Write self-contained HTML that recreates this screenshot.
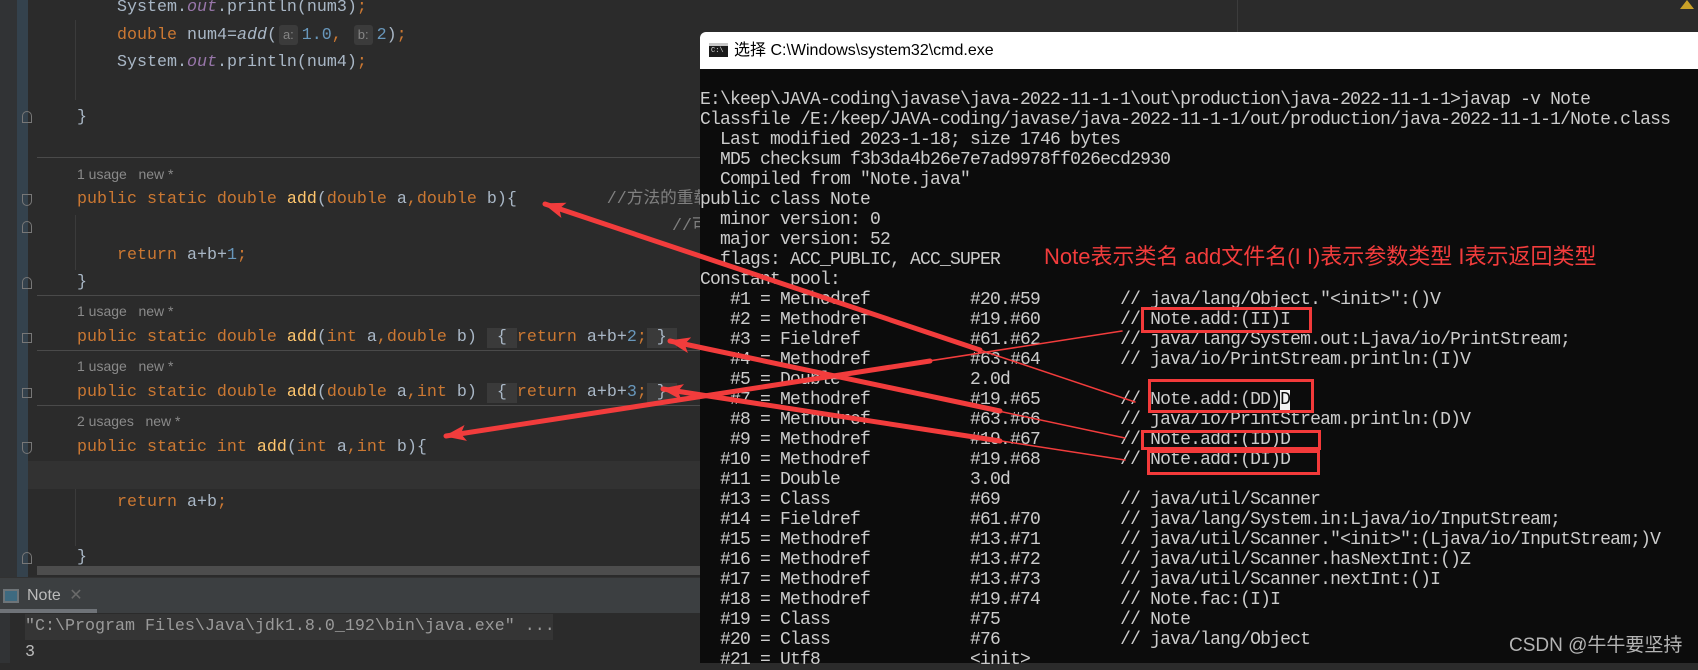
<!DOCTYPE html>
<html><head><meta charset="utf-8"><style>
*{margin:0;padding:0;box-sizing:border-box}
body{width:1698px;height:663px;overflow:hidden;background:#2b2b2b;position:relative;font-family:"Liberation Sans","Noto Sans CJK SC",sans-serif}
.a{position:absolute}
.c{position:absolute;font-family:"Liberation Mono",monospace;font-size:16.67px;line-height:20px;height:20px;color:#a9b7c6;white-space:pre}
.k{color:#cc7832}.f{color:#ffc66d}.n{color:#6897bb}.o{color:#9876aa;font-style:italic}.cm{color:#808080}
.h{display:inline-block;background:#3b3b3b;color:#858585;font-family:"Liberation Sans",sans-serif;font-size:13px;padding:0 4px;border-radius:3px;line-height:20px;margin:0 4px 0 2px}
.u{position:absolute;left:77px;font-size:14px;color:#8a8a8a;line-height:20px}
.sep{position:absolute;left:37px;width:663px;height:1px;background:#4a4a4a}
.bx{display:inline-block;background:#3a3a3a}
.t{position:absolute;left:700px;top:90px;font-family:"Liberation Mono",monospace;font-size:18px;letter-spacing:-0.8px;line-height:20px;color:#cccccc;white-space:pre}
.rb{position:absolute;border:3px solid #f33a3a}
</style></head><body>
<div class="a" style="left:0;top:0;width:17px;height:577px;background:#313335"></div>
<div class="a" style="left:17px;top:0;width:11px;height:577px;background:#34424d"></div>
<div class="a" style="left:75px;top:20px;width:1px;height:80px;background:#3b3b3b"></div>
<div class="a" style="left:75px;top:215px;width:1px;height:55px;background:#3b3b3b"></div>
<div class="a" style="left:75px;top:461px;width:1px;height:85px;background:#3b3b3b"></div>
<div class="a" style="left:22px;top:111px;width:10px;height:12px;border:1px solid #777;border-radius:5px 5px 0 0"></div>
<div class="a" style="left:22px;top:194px;width:10px;height:12px;border:1px solid #777;border-radius:0 0 5px 5px"></div>
<div class="a" style="left:22px;top:221px;width:10px;height:12px;border:1px solid #777;border-radius:5px 5px 0 0"></div>
<div class="a" style="left:22px;top:277px;width:10px;height:12px;border:1px solid #777;border-radius:5px 5px 0 0"></div>
<div class="a" style="left:22px;top:333px;width:10px;height:10px;border:1px solid #777"></div>
<div class="a" style="left:22px;top:388px;width:10px;height:10px;border:1px solid #777"></div>
<div class="a" style="left:22px;top:442px;width:10px;height:12px;border:1px solid #777;border-radius:0 0 5px 5px"></div>
<div class="a" style="left:22px;top:552px;width:10px;height:12px;border:1px solid #777;border-radius:5px 5px 0 0"></div>
<div class="a" style="left:28px;top:461px;width:672px;height:28px;background:#323232"></div>
<div class="c" style="left:117px;top:-2px">System.<span class="o">out</span>.println(num3)<span class="k">;</span></div>
<div class="c" style="left:117px;top:25px"><span class="k">double </span>num4=<span style="font-style:italic">add</span>(<span class="h">a:</span><span class="n">1.0</span><span class="k">,</span> <span class="h">b:</span><span class="n">2</span>)<span class="k">;</span></div>
<div class="c" style="left:117px;top:53px">System.<span class="o">out</span>.println(num4)<span class="k">;</span></div>
<div class="c" style="left:77px;top:108px">}</div>
<div class="sep" style="top:157px"></div>
<div class="u" style="top:164px">1 usage &nbsp;&nbsp;new *</div>
<div class="c" style="left:77px;top:190px"><span class="k">public static double </span><span class="f">add</span>(<span class="k">double </span>a<span class="k">,double </span>b){         <span class="cm" style="font-family:'Liberation Mono','Noto Sans CJK SC',monospace">//方法的重载</span></div>
<div class="c" style="left:672px;top:217px"><span class="cm" style="font-family:'Liberation Mono','Noto Sans CJK SC',monospace">//可以</span></div>
<div class="c" style="left:117px;top:246px"><span class="k">return </span>a+b+<span class="n">1</span><span class="k">;</span></div>
<div class="c" style="left:77px;top:273px">}</div>
<div class="sep" style="top:295px"></div>
<div class="u" style="top:301px">1 usage &nbsp;&nbsp;new *</div>
<div class="c" style="left:77px;top:328px"><span class="k">public static double </span><span class="f">add</span>(<span class="k">int </span>a<span class="k">,double </span>b) <span class="bx"> { </span><span class="k">return </span>a+b+<span class="n">2</span><span class="k">;</span><span class="bx"> } </span></div>
<div class="sep" style="top:350px"></div>
<div class="u" style="top:356px">1 usage &nbsp;&nbsp;new *</div>
<div class="c" style="left:77px;top:383px"><span class="k">public static double </span><span class="f">add</span>(<span class="k">double </span>a<span class="k">,int </span>b) <span class="bx"> { </span><span class="k">return </span>a+b+<span class="n">3</span><span class="k">;</span><span class="bx"> } </span></div>
<div class="sep" style="top:405px"></div>
<div class="u" style="top:411px">2 usages &nbsp;&nbsp;new *</div>
<div class="c" style="left:77px;top:438px"><span class="k">public static int </span><span class="f">add</span>(<span class="k">int </span>a<span class="k">,int </span>b){</div>
<div class="c" style="left:117px;top:493px"><span class="k">return </span>a+b<span class="k">;</span></div>
<div class="c" style="left:77px;top:548px">}</div>
<div class="a" style="left:37px;top:566px;width:663px;height:9px;background:#4d4d4d"></div>
<div class="a" style="left:0;top:577px;width:700px;height:36px;background:#3c3f41;border-top:1px solid #323232"></div>
<div class="a" style="left:3px;top:589px;width:16px;height:14px;border:2px solid #6e7478;background:#3e6a80"></div>
<div class="a" style="left:27px;top:585px;font-size:16px;color:#bbbbbb">Note <span style="color:#6a6a6a;margin-left:4px">✕</span></div>
<div class="a" style="left:0;top:609px;width:97px;height:4px;background:#6f7378"></div>
<div class="a" style="left:0;top:613px;width:700px;height:50px;background:#2b2b2b"></div>
<div class="a" style="left:0;top:613px;width:10px;height:50px;background:#313335"></div>
<div class="a" style="left:25px;top:614px;width:528px;height:26px;background:#353535"></div>
<div class="c" style="left:25px;top:617px;color:#9a9a9a">"C:\Program Files\Java\jdk1.8.0_192\bin\java.exe" ...</div>
<div class="c" style="left:25px;top:643px;color:#bbbbbb">3</div>
<div class="a" style="left:1237px;top:0;width:1px;height:32px;background:#3c3c3c"></div>
<div class="a" style="left:1680px;top:0;width:0;height:0;border-left:7px solid transparent;border-right:7px solid transparent;border-bottom:9px solid #c9a128"></div>
<div class="a" style="left:700px;top:32px;width:998px;height:37px;background:#ffffff;border-radius:6px 0 0 0"></div>
<div class="a" style="left:709px;top:43px;width:19px;height:14px;background:#1a1a1a;border-top:3px solid #c8c8c8"></div>
<div class="a" style="left:711px;top:47px;font-family:'Liberation Mono',monospace;font-size:7px;color:#ddd;line-height:8px">C:\</div>
<div class="a" style="left:734px;top:41px;font-size:16px;color:#000;line-height:20px">选择 C:\Windows\system32\cmd.exe</div>
<div class="a" style="left:700px;top:69px;width:998px;height:594px;background:#0c0c0c"></div>
<div class="t">E:\keep\JAVA-coding\javase\java-2022-11-1-1\out\production\java-2022-11-1-1>javap -v Note
Classfile /E:/keep/JAVA-coding/javase/java-2022-11-1-1/out/production/java-2022-11-1-1/Note.class
  Last modified 2023-1-18; size 1746 bytes
  MD5 checksum f3b3da4b26e7e7ad9978ff026ecd2930
  Compiled from "Note.java"
public class Note
  minor version: 0
  major version: 52
  flags: ACC_PUBLIC, ACC_SUPER
Constant pool:
   #1 = Methodref          #20.#59        // java/lang/Object."&lt;init&gt;":()V
   #2 = Methodref          #19.#60        // Note.add:(II)I
   #3 = Fieldref           #61.#62        // java/lang/System.out:Ljava/io/PrintStream;
   #4 = Methodref          #63.#64        // java/io/PrintStream.println:(I)V
   #5 = Double             2.0d
   #7 = Methodref          #19.#65        // Note.add:(DD)<span style="color:#0c0c0c;background:#f2f2f2">D</span>
   #8 = Methodref          #63.#66        // java/io/PrintStream.println:(D)V
   #9 = Methodref          #19.#67        // Note.add:(ID)D
  #10 = Methodref          #19.#68        // Note.add:(DI)D
  #11 = Double             3.0d
  #13 = Class              #69            // java/util/Scanner
  #14 = Fieldref           #61.#70        // java/lang/System.in:Ljava/io/InputStream;
  #15 = Methodref          #13.#71        // java/util/Scanner."&lt;init&gt;":(Ljava/io/InputStream;)V
  #16 = Methodref          #13.#72        // java/util/Scanner.hasNextInt:()Z
  #17 = Methodref          #13.#73        // java/util/Scanner.nextInt:()I
  #18 = Methodref          #19.#74        // Note.fac:(I)I
  #19 = Class              #75            // Note
  #20 = Class              #76            // java/lang/Object
  #21 = Utf8               &lt;init&gt;</div>
<div class="a" style="left:1044px;top:243px;font-size:22px;line-height:28px;color:#f23c3c;white-space:nowrap">Note表示类名 add文件名(I I)表示参数类型 I表示返回类型</div>
<div class="rb" style="left:1141px;top:307px;width:171px;height:26px"></div>
<div class="rb" style="left:1148px;top:379px;width:166px;height:34px"></div>
<div class="rb" style="left:1141px;top:430px;width:180px;height:20px"></div>
<div class="rb" style="left:1147px;top:450px;width:173px;height:25px"></div>
<div class="a" style="left:1509px;top:630px;font-size:19px;color:#b4b4b4;white-space:nowrap">CSDN @牛牛要坚持</div>
<svg class="a" style="left:0;top:0" width="1698" height="663">
<defs><marker id="m" markerUnits="userSpaceOnUse" markerWidth="24" markerHeight="18" refX="20" refY="8" orient="auto"><path d="M0,0 L22,8 L0,16 L5,8 z" fill="#f23c3c"/></marker></defs>
<g stroke="#f23c3c" fill="none" stroke-linecap="round">
<line x1="1135" y1="402" x2="545" y2="204" stroke-width="1.5"/>
<line x1="980" y1="350" x2="545" y2="204" stroke-width="5" marker-end="url(#m)"/>
<line x1="1125" y1="438" x2="670" y2="341" stroke-width="1.5"/>
<line x1="1000" y1="411" x2="670" y2="341" stroke-width="5" marker-end="url(#m)"/>
<line x1="1125" y1="460" x2="663" y2="389" stroke-width="1.5"/>
<line x1="1000" y1="441" x2="663" y2="389" stroke-width="5" marker-end="url(#m)"/>
<line x1="1122" y1="331" x2="446" y2="436" stroke-width="1.5"/>
<line x1="930" y1="361" x2="446" y2="436" stroke-width="5" marker-end="url(#m)"/>
</g></svg>
</body></html>
